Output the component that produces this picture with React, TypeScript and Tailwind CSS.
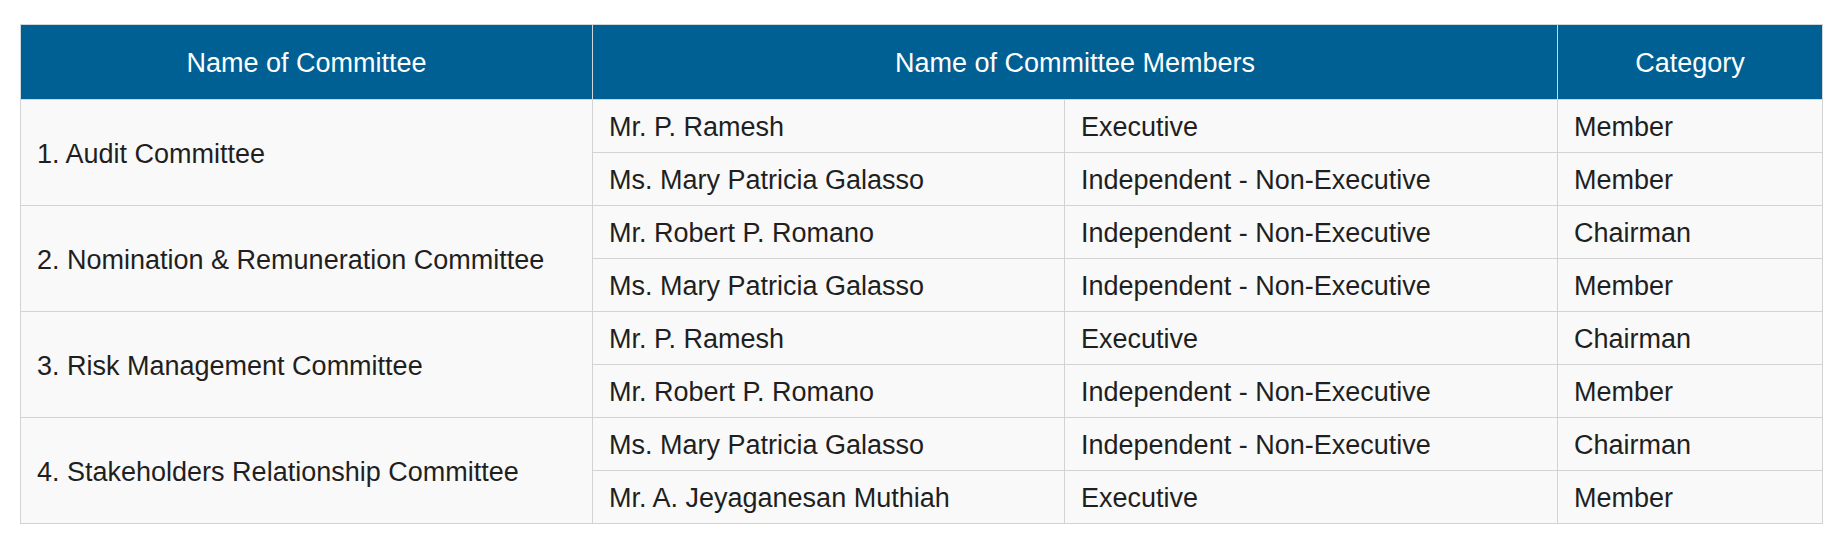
import React from "react";

type Member = { name: string; type: string; category: string };
type Committee = { title: string; members: Member[] };

const data: Committee[] = [
  {
    title: "1. Audit Committee",
    members: [
      { name: "Mr. P. Ramesh", type: "Executive", category: "Member" },
      { name: "Ms. Mary Patricia Galasso", type: "Independent - Non-Executive", category: "Member" },
    ],
  },
  {
    title: "2. Nomination & Remuneration Committee",
    members: [
      { name: "Mr. Robert P. Romano", type: "Independent - Non-Executive", category: "Chairman" },
      { name: "Ms. Mary Patricia Galasso", type: "Independent - Non-Executive", category: "Member" },
    ],
  },
  {
    title: "3. Risk Management Committee",
    members: [
      { name: "Mr. P. Ramesh", type: "Executive", category: "Chairman" },
      { name: "Mr. Robert P. Romano", type: "Independent - Non-Executive", category: "Member" },
    ],
  },
  {
    title: "4. Stakeholders Relationship Committee",
    members: [
      { name: "Ms. Mary Patricia Galasso", type: "Independent - Non-Executive", category: "Chairman" },
      { name: "Mr. A. Jeyaganesan Muthiah", type: "Executive", category: "Member" },
    ],
  },
];

const td = "border border-[#d3d3d3] h-[53px] pl-[16px] pr-2 pt-[3px] text-left align-middle font-normal";
const th = "border border-[#cfd6dc] h-[75px] pt-[2px] text-center align-middle font-normal";

export default function App() {
  return (
    <div className="min-h-[537px] w-[1848px] bg-white pl-[20px] pt-[24px] font-['Liberation_Sans',Arial,sans-serif]">
      <table className="w-[1802px] table-fixed border-collapse border border-[#d3d3d3] text-[27px] leading-none text-[#1f1f1f]">
        <colgroup>
          <col className="w-[572px]" />
          <col className="w-[472px]" />
          <col className="w-[493px]" />
          <col className="w-[265px]" />
        </colgroup>
        <thead>
          <tr className="bg-[#005f93] text-[27px] text-white">
            <th className={th}>Name of Committee</th>
            <th className={th} colSpan={2}>
              Name of Committee Members
            </th>
            <th className={th}>Category</th>
          </tr>
        </thead>
        <tbody className="bg-[#f9f9f9]">
          {data.map((c) =>
            c.members.map((m, i) => (
              <tr key={c.title + i}>
                {i === 0 && (
                  <td className={td} rowSpan={c.members.length}>
                    {c.title}
                  </td>
                )}
                <td className={td}>{m.name}</td>
                <td className={td}>{m.type}</td>
                <td className={td}>{m.category}</td>
              </tr>
            ))
          )}
        </tbody>
      </table>
    </div>
  );
}
